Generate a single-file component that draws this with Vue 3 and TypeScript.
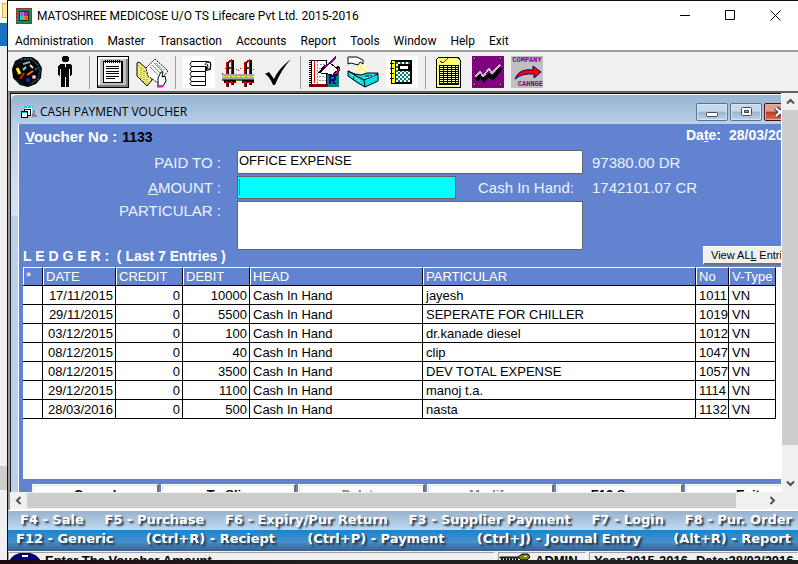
<script setup lang="ts">
import { ref } from 'vue'

interface Entry {
  date: string
  credit: number
  debit: number
  head: string
  particular: string
  no: number
  type: string
}

const menus: string[] = ['Administration', 'Master', 'Transaction', 'Accounts', 'Report', 'Tools', 'Window', 'Help', 'Exit']

const entries: Entry[] = [
  { date: '17/11/2015', credit: 0, debit: 10000, head: 'Cash In Hand', particular: 'jayesh', no: 1011, type: 'VN' },
  { date: '29/11/2015', credit: 0, debit: 5500, head: 'Cash In Hand', particular: 'SEPERATE FOR CHILLER', no: 1019, type: 'VN' },
  { date: '03/12/2015', credit: 0, debit: 100, head: 'Cash In Hand', particular: 'dr.kanade diesel', no: 1012, type: 'VN' },
  { date: '08/12/2015', credit: 0, debit: 40, head: 'Cash In Hand', particular: 'clip', no: 1047, type: 'VN' },
  { date: '08/12/2015', credit: 0, debit: 3500, head: 'Cash In Hand', particular: 'DEV TOTAL EXPENSE', no: 1057, type: 'VN' },
  { date: '29/12/2015', credit: 0, debit: 1100, head: 'Cash In Hand', particular: 'manoj t.a.', no: 1114, type: 'VN' },
  { date: '28/03/2016', credit: 0, debit: 500, head: 'Cash In Hand', particular: 'nasta', no: 1132, type: 'VN' },
]

const actions = [
  { label: 'Cancel', disabled: false },
  { label: 'To Slip', disabled: false },
  { label: 'Delete', disabled: true },
  { label: 'Modify', disabled: true },
  { label: 'F12 Save', disabled: false },
  { label: 'Exit', disabled: false },
]

const shortcutsTop: string[] = ['F4 - Sale', 'F5 - Purchase', 'F6 - Expiry/Pur Return', 'F3 - Supplier Payment', 'F7 - Login', 'F8 - Pur. Order']
const shortcutsBottom: string[] = ['F12 - Generic', '(Ctrl+R) - Reciept', '(Ctrl+P) - Payment', '(Ctrl+J) - Journal Entry', '(Alt+R) - Report']

const paidTo = ref('OFFICE EXPENSE')
const amount = ref('')
const particular = ref('')
</script>

<template>
  <div class="screen">
    <div class="behind">
      <div class="behind-top"><span class="behind-tab"></span></div>
      <div class="behind-blue"></div>
      <div class="behind-rest"></div>
      <div class="behind-thumb"></div>
      <div class="behind-end"></div>
    </div>

    <main class="app">
      <header class="titlebar">
        <svg class="app-icon" width="16" height="16" viewBox="0 0 16 16" shape-rendering="crispEdges">
          <rect width="16" height="16" fill="#8c3a3a" /><rect x="1" y="1" width="14" height="14" fill="#1c8a4c" />
          <rect x="3" y="3" width="10" height="10" fill="#222" />
          <rect x="4" y="4" width="4" height="4" fill="#ff5fa0" /><rect x="8" y="4" width="4" height="4" fill="#8a2be2" />
          <rect x="4" y="8" width="4" height="4" fill="#20c8f0" /><rect x="8" y="8" width="4" height="4" fill="#ff8000" />
          <rect x="5" y="5" width="2" height="3" fill="#4878ff" /><rect x="9" y="9" width="2" height="2" fill="#ff3030" />
        </svg>
        <span class="app-title">MATOSHREE MEDICOSE U/O TS Lifecare Pvt Ltd. 2015-2016</span>
        <div class="window-controls">
          <button type="button" aria-label="Minimize"><svg width="11" height="11" viewBox="0 0 11 11"><path d="M0 5.5H10" stroke="#000" /></svg></button>
          <button type="button" aria-label="Maximize"><svg width="11" height="11" viewBox="0 0 11 11"><path d="M.5.5h9v9h-9z" fill="none" stroke="#000" /></svg></button>
          <button type="button" aria-label="Close"><svg width="11" height="11" viewBox="0 0 11 11"><path d="M.5.5l10 10M10.500.5l-10 10" stroke="#000" /></svg></button>
        </div>
      </header>

      <nav class="menubar">
        <button v-for="m in menus" :key="m" type="button">{{ m }}</button>
      </nav>

      <div class="toolbar">
        <button type="button" aria-label="Palette">
          <svg viewBox="0 0 32 32">
            <path d="M12 1h9l6 4 4 7-1 10-5 6-8 3-8-2-7-7-1-9 3-8z" fill="#000" />
            <path d="M10 3h10l6 5 3 7-2 8-8 5" fill="none" stroke="#145050" stroke-width="2" stroke-dasharray="2 1" />
            <path d="M4 9l7-5M5 24l7 4" stroke="#145050" stroke-dasharray="2 1" />
            <path d="M6 12l3 6" stroke="#fff000" stroke-width="3" /><path d="M12 8l7-2" stroke="#8ab" stroke-width="2" />
            <path d="M9 23l4-6" stroke="#e02010" stroke-width="2" /><path d="M16 19l6-4" stroke="#ff7000" stroke-width="2" />
            <path d="M12 14l3-3" stroke="#70e0f0" stroke-width="2" /><path d="M19 9l3 3" stroke="#ddd" stroke-width="2" />
            <circle cx="17" cy="24" r="2" fill="#1030c0" /><circle cx="23" cy="21" r="2" fill="#f0b8d0" /><circle cx="25" cy="13" r="1.500" fill="#2040b0" />
          </svg>
        </button>
        <button type="button" aria-label="User">
          <svg viewBox="0 0 32 32" shape-rendering="crispEdges">
            <rect x="13" y="0" width="5" height="6" fill="#000" /><rect x="12" y="1" width="7" height="4" fill="#000" />
            <path d="M11 8h9l2 2v9l-2 1v-7h-1v18h-3V21h-1v10h-4V13h-1v7l-2-1v-9z" fill="#000" />
            <path d="M15 8h1v3h-1z" fill="#fff" />
          </svg>
        </button>
        <span class="sep"></span>
        <button type="button" aria-label="Notes">
          <svg viewBox="0 0 32 32" shape-rendering="crispEdges">
            <rect width="32" height="32" fill="#000" /><rect x="1" y="1" width="30" height="30" fill="#fff" />
            <path d="M3 3h28v28H1v-2h2z" fill="#808080" /><rect x="3" y="3" width="26" height="26" fill="#c0c0c0" />
            <rect x="6" y="5" width="20" height="22" fill="#000" /><rect x="7" y="6" width="17" height="20" fill="#fff" />
            <path d="M8 5h15" stroke="#000" stroke-width="3" stroke-dasharray="1 1" />
            <path d="M9 10.500h13M9 12.500h13M9 15.500h13M9 17.500h13M9 20.500h13M9 22.500h9" stroke="#000" />
          </svg>
        </button>
        <button type="button" aria-label="Open file">
          <svg viewBox="0 0 32 32">
            <path d="M1 7l2-1 8 7 5-4v15l-5 6L1 20z" fill="#f4f080" stroke="#000" />
            <path d="M2 9l9 8v12M5 12v11M8 15v12" stroke="#808000" stroke-dasharray="1 1" fill="none" />
            <path d="M10 12l9-9 13 12-10 12-10-7z" fill="#fff" stroke="#000" stroke-dasharray="2 1" />
            <path d="M14 11l8 8M16 9l9 9M18 7l9 9M20 7l8 8" stroke="#00d8e8" />
            <path d="M22 30v-8l3-6h2l-1 5 3-1 1 5-3 5z" fill="#fff" stroke="#000" />
            <path d="M21 30.500h6" stroke="#f0f" stroke-width="2" />
          </svg>
        </button>
        <span class="sep"></span>
        <button type="button" aria-label="Voucher roll">
          <svg viewBox="0 0 32 32">
            <rect width="32" height="32" fill="#fff" />
            <path d="M8.500 5.500h16l3 1v7l-4 1v-4h-15q-3-2 0-5zM8.500 10.500h14v5h-14q-3-2 0-5zM8.500 15.500h14v5h-14q-3-2 0-5zM8.500 20.500h14v5h-14q-3-2 0-5zM8.500 25.500h14v4h-14q-3-2 0-4z" fill="#fff" stroke="#000" />
            <path d="M22 9q1-4 4-3t1 7h-3q2-2 0-5" fill="none" stroke="#000" />
          </svg>
        </button>
        <button type="button" aria-label="Bridge">
          <svg viewBox="0 0 32 32" shape-rendering="crispEdges">
            <path d="M0 18l4-6M11 8l5 7 6-6M28 8l4 6" fill="none" stroke="#d00000" stroke-dasharray="1 2" />
            <path d="M4 8l6-4M22 8l6-4M4 14l6-3M22 14l6-3" stroke="#c00000" stroke-width="2" />
            <path d="M5 7v13M10 4v15M23 7v13M28 4v15" stroke="#000" stroke-width="3" />
            <path d="M4.500 7v13M9.500 4v15M22.500 7v13M27.500 4v15" stroke="#e00000" stroke-width="1" />
            <rect y="18" width="32" height="5" fill="#a8a8a8" /><path d="M0 20.500h32" stroke="#ffff00" stroke-dasharray="3 2" />
            <rect y="23" width="32" height="2" fill="#606000" />
            <path d="M5 25v6M10 25v4M23 25v6M28 25v4M2 25.500h12M20 25.500h12" stroke="#000" stroke-width="3" />
            <path d="M4.500 25v6M9.500 25v4M22.500 25v6M27.500 25v4M3 26.500h10M21 26.500h10" stroke="#e00000" />
          </svg>
        </button>
        <button type="button" aria-label="Confirm">
          <svg viewBox="0 0 32 32"><path d="M4 18l4-2 5 7Q17 13 30 3 20 14 14 29h-2Q9 21 4 18z" fill="#000" /></svg>
        </button>
        <span class="sep"></span>
        <button type="button" aria-label="Register">
          <svg viewBox="0 0 32 32" shape-rendering="crispEdges">
            <path d="M18 17h13v14H18z" fill="#008080" />
            <path d="M3 4h15v25H3z" fill="#fff" stroke="#000" /><path d="M2 28h18v3H1z" fill="#800000" />
            <path d="M1.500 4v26" stroke="#000" stroke-width="2" stroke-dasharray="1 1" /><path d="M6.500 5v22" stroke="#f00" />
            <path d="M9.500 5v23M12 8h5M11 12h2M11 16h3M11 20h6M11 24h7" stroke="#909090" stroke-dasharray="2 1" />
            <path d="M12 16l4-6 6-3 8 6-2 7-8-2-7-1z" fill="#fff" stroke="#000" />
            <path d="M12 16L28 1" stroke="#800080" stroke-width="2" /><path d="M11 17l5-6" stroke="#000" stroke-width="2" />
            <path d="M30 10l2 3-3 6-4-1 4-3z" fill="#e0107c" stroke="#000" />
            <path d="M22 28v-8h4q3 2 0 4h-4M24 24l3 4" fill="none" stroke="#000080" stroke-width="2" />
          </svg>
        </button>
        <button type="button" aria-label="Invoice">
          <svg viewBox="0 0 32 32">
            <path d="M9 8l8-2 4 11-9 1-3-4z" fill="#ffffc0" /><path d="M10 9l10 7M16 7l-5 10" stroke="#e8c860" stroke-dasharray="1 1" />
            <path d="M1 1h9l6 3v4l-3-2-2 3-7-2-3 1z" fill="#fff" stroke="#000" />
            <path d="M1 15l7 3 6 1 6-2h11v8l-13 6-7-4-10-7z" fill="#00e0e8" stroke="#000" />
            <path d="M1 15l8 5 8 4 14-6M17 24l1 7M8 18l-2 6M18 20h8" stroke="#000" fill="none" />
            <path d="M4 18l10 8M19 22l9-3" stroke="#fff" stroke-dasharray="2 1" />
          </svg>
        </button>
        <button type="button" aria-label="Ledger book">
          <svg viewBox="0 0 32 32" shape-rendering="crispEdges">
            <rect width="32" height="32" fill="#fff" /><rect x="5" y="4" width="21" height="24" fill="#000" />
            <rect x="6" y="5" width="3" height="22" fill="#ffff00" /><rect x="10" y="6" width="14" height="20" fill="#fff" />
            <path d="M10 7h14M10 11h14M10 15h14M10 19h14M10 23h14" stroke="#008080" stroke-width="2" stroke-dasharray="2 2" />
            <path d="M12 9h12M12 13h12M12 17h12M12 21h12M12 25h12" stroke="#008080" stroke-width="2" stroke-dasharray="2 2" />
            <rect x="13" y="9" width="10" height="5" fill="#fff" stroke="#000" stroke-width="2" />
            <path d="M4 7.500h4M4 12.500h4M4 17.500h4M4 22.500h4" stroke="#000" />
          </svg>
        </button>
        <span class="sep"></span>
        <button type="button" aria-label="Stock sheet">
          <svg viewBox="0 0 32 32" shape-rendering="crispEdges">
            <path d="M6 1h19l2 3v27H3V4z" fill="#ffff70" stroke="#000" />
            <path d="M4 5.500h22M4 7.500h22M4 29.500h22" stroke="#fffff0" />
            <rect x="6" y="9" width="20" height="20" fill="#000" />
            <path d="M7 10.500h18M7 12.500h18M7 14.500h18M7 16.500h18M7 18.500h18M7 20.500h18M7 22.500h18M7 24.500h18M7 26.500h18" stroke="#ffffb0" stroke-dasharray="3 1" />
            <path d="M10.500 9v20M18.500 9v20" stroke="#000" /><path d="M7 5l3 2 5-5" fill="none" stroke="#f00" />
          </svg>
        </button>
        <button type="button" aria-label="Graph">
          <svg viewBox="0 0 32 32" shape-rendering="crispEdges">
            <rect width="32" height="32" rx="1" fill="#800080" />
            <path d="M4 24l5-4 3 4 5-5 4 3 8-10" fill="none" stroke="#000" stroke-width="4" />
            <path d="M3 21l5-5 3 4 6-7 3 4 8-8" fill="none" stroke="#c0c0c0" stroke-width="2" />
            <path d="M2 2h2v2H2zM28 2h2v2h-2zM2 28h2v2H2zM28 28h2v2h-2z" fill="#000" /><path d="M2 2h1v1H2zM28 2h1v1h-1zM2 28h1v1H2zM28 28h1v1h-1z" fill="#fff" />
          </svg>
        </button>
        <button type="button" class="company" aria-label="Company change">
          <span>COMPANY</span>
          <svg viewBox="0 0 32 16"><path d="M4 15Q8 4 22 6V2l8 6-7 6v-4Q11 9 4 15z" fill="#f00" stroke="#000080" /></svg>
          <span class="low">CAHNGE</span>
        </button>
      </div>

      <section class="workspace">
        <div class="pane">
          <div class="child">
            <div class="child-title">
              <svg width="16" height="14" viewBox="0 0 16 14" shape-rendering="crispEdges">
                <path d="M3 1h8v9H5" fill="#fff" /><path d="M3 1.500h9" stroke="#00d8e8" stroke-width="2" stroke-dasharray="3 1" />
                <path d="M12 5h2v5h2v2h-5z" fill="#808890" /><rect x="3.500" y="4.500" width="6" height="6" fill="#fff" stroke="#000" />
                <rect x=".5" y="6.500" width="6" height="6" fill="#fff" stroke="#000" /><path d="M1 7.500h5" stroke="#00c8d8" />
              </svg>
              <h1>CASH PAYMENT VOUCHER</h1>
              <div class="child-controls">
                <button type="button" aria-label="Minimize form"><svg width="12" height="12" viewBox="0 0 12 12"><rect x=".5" y="6.500" width="11" height="4" rx="1" fill="#fff" stroke="#444c5c" /></svg></button>
                <button type="button" aria-label="Maximize form"><svg width="12" height="12" viewBox="0 0 12 12"><rect x="1.500" y="1.500" width="10" height="8" rx="1" fill="#fff" stroke="#444c5c" /><rect x="4.500" y="4.500" width="4" height="2" fill="#7ba0cc" stroke="#444c5c" /></svg></button>
                <button type="button" class="close" aria-label="Close form"><svg width="12" height="12" viewBox="0 0 12 12"><path d="M2 2l8 8M10 2l-8 8" stroke="#444c5c" stroke-width="5" /><path d="M2 2l8 8M10 2l-8 8" stroke="#fff" stroke-width="2" /></svg></button>
              </div>
            </div>

            <form class="voucher" @submit.prevent>
              <div class="voucher-head">
                <span><u>V</u>oucher No :</span>
                <strong class="voucher-no">1133</strong>
                <span class="date">Da<u>t</u>e:</span>
                <span class="date-value">28/03/2016</span>
              </div>

              <div class="fields">
                <label for="paid-to">PAID TO :</label>
                <input id="paid-to" v-model="paidTo" class="wide" type="text" />
                <output class="balance">97380.00 DR</output>

                <label for="amount"><u>A</u>MOUNT :</label>
                <div class="amount-box"><span class="caret"></span><input id="amount" v-model="amount" type="text" /></div>
                <span class="cash">Cash In Hand:</span>
                <output class="balance">1742101.07 CR</output>

                <label for="particular" class="top">PARTICULAR :</label>
                <textarea id="particular" v-model="particular" class="wide"></textarea>
              </div>

              <div class="ledger-head">
                <h2>L E D G E R : &nbsp;( Last 7 Entries )</h2>
                <button type="button" class="view-all">View AL<u>L</u> Entries</button>
              </div>

              <div class="ledger">
                <table>
                  <colgroup>
                    <col class="c-mark" /><col class="c-date" /><col class="c-sum" /><col class="c-sum" />
                    <col class="c-head" /><col class="c-part" /><col class="c-no" /><col class="c-type" />
                  </colgroup>
                  <thead>
                    <tr><th>*</th><th>DATE</th><th>CREDIT</th><th>DEBIT</th><th>HEAD</th><th>PARTICULAR</th><th>No</th><th>V-Type</th></tr>
                  </thead>
                  <tbody>
                    <tr v-for="e in entries" :key="e.no">
                      <td></td>
                      <td class="num">{{ e.date }}</td>
                      <td class="num">{{ e.credit }}</td>
                      <td class="num">{{ e.debit }}</td>
                      <td>{{ e.head }}</td>
                      <td>{{ e.particular }}</td>
                      <td class="num">{{ e.no }}</td>
                      <td>{{ e.type }}</td>
                    </tr>
                  </tbody>
                </table>
              </div>

              <div class="actions">
                <button v-for="a in actions" :key="a.label" type="button" :disabled="a.disabled">{{ a.label }}</button>
              </div>
            </form>
          </div>
        </div>

        <div class="vbar">
          <button type="button" aria-label="Scroll up"><svg width="9" height="7" viewBox="0 0 9 7"><path d="M1 5.500l3.500-3.500L8 5.500" fill="none" stroke="#505050" stroke-width="2" /></svg></button>
          <div class="vthumb"></div>
          <button type="button" aria-label="Scroll down"><svg width="9" height="7" viewBox="0 0 9 7"><path d="M1 1.500L4.500 5 8 1.500" fill="none" stroke="#505050" stroke-width="2" /></svg></button>
        </div>
        <div class="hbar">
          <button type="button" aria-label="Scroll left"><svg width="7" height="9" viewBox="0 0 7 9"><path d="M5.500 1L2 4.500 5.500 8" fill="none" stroke="#505050" stroke-width="2" /></svg></button>
          <div class="hthumb"></div>
          <button type="button" aria-label="Scroll right"><svg width="7" height="9" viewBox="0 0 7 9"><path d="M1.500 1L5 4.500 1.500 8" fill="none" stroke="#505050" stroke-width="2" /></svg></button>
        </div>
      </section>

      <section class="shortcuts">
        <div class="row light"><span v-for="s in shortcutsTop" :key="s">{{ s }}</span></div>
        <div class="row deep"><span v-for="s in shortcutsBottom" :key="s">{{ s }}</span></div>
      </section>

      <footer class="status">
        <div class="cell message">
          <svg width="32" height="14" viewBox="0 0 32 14"><ellipse cx="16" cy="9" rx="15" ry="9" fill="#000080" stroke="#000" /><path d="M13 2h6v2h-6z" fill="#fff" /></svg>
          <span>Enter The Voucher Amount</span>
        </div>
        <div class="cell user">
          <svg width="32" height="14" viewBox="0 0 32 14"><path d="M1 4h18l4-3h6l2 3-3 3h-6l-2-2H1z" fill="#808000" stroke="#000" /><path d="M25 3h3v1h-3z" fill="#fff" /><path d="M2 7h18" stroke="#000" stroke-width="3" stroke-dasharray="2 1" /></svg>
          <span>ADMIN</span>
        </div>
        <div class="cell period"><span>Year:2015-2016</span><span>Date:28/03/2016</span></div>
      </footer>
    </main>
    <div class="taskbar"></div>
  </div>
</template>

<style>
body {
  margin: 0;
}
</style>

<style scoped>
* {
  box-sizing: border-box;
}
.screen {
  display: grid;
  grid-template-columns: 7px minmax(0, 1fr);
  grid-template-rows: minmax(0, 1fr) 4px;
  height: 100vh;
  overflow: hidden;
  background: #f0f0f0;
  font-family: "Liberation Sans", Arial, sans-serif;
}
button {
  padding: 0;
  border: 0;
  background: none;
  color: inherit;
  font: inherit;
  white-space: nowrap;
}
svg {
  display: block;
}

/* window peeking out at the left */
.behind {
  display: flex;
  flex-direction: column;
}
.behind-top {
  height: 23px;
  padding: 3px 0 0 2px;
  background: #fafafa;
}
.behind-tab {
  display: block;
  height: 15px;
  border: 1px solid #e0b840;
  border-right: 0;
  background: #ffe9a0;
}
.behind-blue {
  height: 23px;
  background: #1a6fc0;
}
.behind-rest {
  flex: 1;
  background: #eeeeee;
}
.behind-thumb {
  height: 24px;
  background: #cdcdcd;
}
.behind-end {
  height: 70px;
}
.taskbar {
  grid-column: 1 / -1;
  background: linear-gradient(90deg, #1c0810, #202022 40%);
}

.app {
  display: flex;
  flex-direction: column;
  min-width: 0;
  min-height: 0;
  border-top: 1px solid #101010;
  border-left: 1px solid #101010;
}

.titlebar {
  display: flex;
  align-items: center;
  height: 29px;
  padding-left: 8px;
  background: #fff;
  flex: none;
}
.app-title {
  margin-left: 5px;
  font: 12px/16px Roboto, "Noto Sans", sans-serif;
  color: #000;
  white-space: nowrap;
}
.window-controls {
  display: flex;
  margin-left: auto;
}
.window-controls button {
  display: grid;
  place-items: center;
  width: 45px;
  height: 28px;
}

.menubar {
  display: flex;
  flex: none;
  gap: 14px;
  height: 20px;
  padding-left: 7px;
  background: #fff;
  font: 12px/22px Roboto, "Noto Sans", sans-serif;
}

.toolbar {
  display: flex;
  flex: none;
  gap: 7px;
  height: 41px;
  padding: 4px 3px 0;
  border-top: 2px solid #a0a0a0;
  background: #f0f0f0;
}
.toolbar button,
.toolbar svg {
  width: 32px;
  height: 32px;
}
.toolbar .sep {
  width: 1px;
  height: 33px;
  background: #a0a0a0;
}
.toolbar .company {
  display: flex;
  flex-direction: column;
  align-items: center;
  background: #c0c0c0;
  color: #800080;
  font: bold 7px/8px "Liberation Mono", monospace;
}
.toolbar .company svg {
  height: 16px;
}
.company .low {
  align-self: flex-end;
}

.workspace {
  display: grid;
  flex: 1;
  grid-template-columns: minmax(0, 1fr) 17px;
  grid-template-rows: minmax(0, 1fr) 17px;
  min-height: 0;
  border-top: 2px solid #606060;
  border-left: 2px solid #989898;
  border-bottom: 2px solid #fff;
  background: #f0f0f0;
}
.pane {
  min-width: 0;
  overflow: hidden;
  border-top: 1px solid #101010;
  border-left: 1px solid #202020;
}
.child {
  width: 803px;
  padding: 0 8px;
  border-top: 1px solid #fff;
  border-radius: 6px 0 0;
  background: linear-gradient(#99b4d1, #b9d1ea 30px, #d4e3f4 120px, #b9d1ea 121px);
}
.child-title {
  display: flex;
  align-items: center;
  height: 29px;
  padding: 5px 10px 0 2px;
}
.child-title h1 {
  margin: 0 0 0 3px;
  font: 12px/16px "Open Sans", "Noto Sans", sans-serif;
  color: #000;
}
.child-controls {
  display: flex;
  gap: 2px;
  margin-left: auto;
}
.child-controls button {
  display: grid;
  place-items: center;
  width: 32px;
  height: 18px;
  border: 1px solid #5b7393;
  border-radius: 2px;
  background: linear-gradient(#c6d8ea 45%, #9bb5d2 50%, #bcd2e8);
  box-shadow: inset 0 0 0 1px #d8e6f4;
}
.child-controls .close {
  border-color: #4a1018;
  background: linear-gradient(#e0a090 45%, #c03820 50%, #d87050);
  box-shadow: inset 0 0 0 1px #e8b0a0;
}

.voucher {
  height: 400px;
  border-left: 1px solid #fff;
  margin-left: -1px;
  background: #6284d0;
  color: #eef2fc;
}
.voucher-head {
  display: flex;
  height: 26px;
  padding-left: 6px;
  color: #fff;
  font-size: 15px;
  font-weight: bold;
  line-height: 26px;
  white-space: nowrap;
}
.voucher-no {
  margin-left: 5px;
  color: #000;
  font-size: 14px;
}
.date {
  margin-left: auto;
  font-size: 14px;
  line-height: 22px;
}
.date-value {
  width: 77px;
  margin-left: 8px;
  font-size: 14px;
  line-height: 22px;
}
.fields {
  display: grid;
  grid-template-columns: 218px 219px 127px auto;
  grid-template-rows: 24px 23px 49px;
  row-gap: 2px;
  margin-bottom: -4px;
  font-size: 15px;
}
.fields label {
  align-self: center;
  padding-right: 16px;
  text-align: right;
}
.fields .top {
  align-self: start;
  line-height: 20px;
}
.fields input,
.fields textarea {
  width: 100%;
  height: 100%;
  margin: 0;
  padding: 0 2px;
  border: 1px solid #646464;
  border-radius: 0;
  background: #fff;
  color: #000;
  font: 13px/16px "Liberation Sans", Arial, sans-serif;
  outline: none;
  resize: none;
}
.fields input {
  padding: 0 1px 4px;
}
.fields .wide {
  grid-column: 2 / 4;
}
.amount-box {
  display: flex;
  align-items: flex-start;
  padding: 2px 1px;
  border: 1px solid #646464;
  background: #00ffff;
}
.amount-box .caret {
  flex: none;
  width: 1px;
  height: 16px;
  background: #d02020;
}
.amount-box input {
  border: 0;
  background: none;
}
.cash {
  align-self: center;
  padding-left: 22px;
  white-space: nowrap;
}
.balance {
  align-self: center;
  padding-left: 9px;
}

.ledger-head {
  display: flex;
  justify-content: space-between;
  height: 21px;
  padding-left: 4px;
}
.ledger-head h2 {
  margin: 0;
  color: #fff;
  font-size: 14px;
  line-height: 21px;
  white-space: nowrap;
}
.view-all {
  width: 103px;
  height: 19px;
  padding-left: 7px;
  border: 1px solid #fff;
  border-bottom: 2px solid #707070;
  background: #f0f0f0;
  color: #000;
  font-size: 11px;
  line-height: 16px;
  text-align: left;
}

.ledger {
  min-height: 212px;
  margin-left: 4px;
  background: #fff;
}
table {
  width: 753px;
  table-layout: fixed;
  border-collapse: separate;
  border-spacing: 0;
  font-size: 13px;
  color: #000;
}
.c-mark { width: 20px; }
.c-date { width: 73px; }
.c-sum { width: 67px; }
.c-head { width: 173px; }
.c-part { width: 273px; }
.c-no { width: 33px; }
.c-type { width: 47px; }
th,
td {
  height: 19px;
  padding: 0 2px 0 3px;
  overflow: hidden;
  border-right: 1px solid #000;
  border-bottom: 1px solid #000;
  line-height: 17px;
  text-align: left;
  white-space: nowrap;
}
th {
  border-top: 1px solid #fff;
  box-shadow: inset 1px 0 #fff;
  background: #6284d0;
  color: #fff;
  font-weight: normal;
}
.num {
  text-align: right;
}

.actions {
  display: grid;
  grid-template-columns: 127px 135px repeat(4, 127px);
  gap: 2px;
  margin: 5px 0 0 13px;
}
.actions button {
  height: 28px;
  padding-bottom: 6px;
  border: 1px solid #fff;
  border-right: 2px solid #707070;
  border-bottom: 2px solid #707070;
  background: #fff;
  box-shadow: inset 1px 1px #e3e0e0;
  color: #000;
  font-size: 13px;
  font-weight: bold;
  line-height: 15px;
}
.actions button:disabled {
  color: #808080;
}

.vbar {
  display: flex;
  flex-direction: column;
  background: #f0f0f0;
  border-left: 1px solid #fff;
}
.vbar button {
  display: grid;
  place-items: center;
  height: 17px;
  flex: none;
}
.vthumb {
  height: 84%;
  background: #cdcdcd;
}
.vbar button:last-child {
  margin-top: auto;
}
.hbar {
  display: flex;
  height: 16px;
  padding-top: 1px;
  background: #f0f0f0;
}
.hbar button {
  display: grid;
  place-items: center;
  width: 17px;
}
.hthumb {
  width: 92%;
  background: #cdcdcd;
}
.hbar button:last-child {
  margin-left: auto;
}

.shortcuts {
  flex: none;
  color: #fff;
  font: bold 13px/18px "DejaVu Sans", sans-serif;
  text-shadow: 2px 2px 2px #203040;
}
.row {
  display: flex;
  justify-content: space-between;
  height: 19px;
  padding: 0 6px 0 12px;
  white-space: nowrap;
}
.light {
  background: linear-gradient(#9bb1cc, #bcdcf2);
}
.deep {
  height: 21px;
  padding: 0 7px 0 8px;
  background: linear-gradient(#1585d2, #4590cc 55%, #3a5f90);
}

.status {
  display: flex;
  flex: none;
  gap: 3px;
  height: 9px;
  padding-top: 1px;
  overflow: hidden;
  background: #f0f0f0;
  color: #000;
  font-size: 13px;
  font-weight: bold;
  line-height: 15px;
  white-space: nowrap;
}
.cell {
  display: flex;
  height: 20px;
  border: 1px solid #a0a0a0;
  border-right-color: #fff;
}
.message {
  flex: 1;
  gap: 4px;
}
.user {
  width: 88px;
  gap: 4px;
}
.period {
  width: 209px;
  gap: 8px;
  padding-left: 4px;
}
</style>
